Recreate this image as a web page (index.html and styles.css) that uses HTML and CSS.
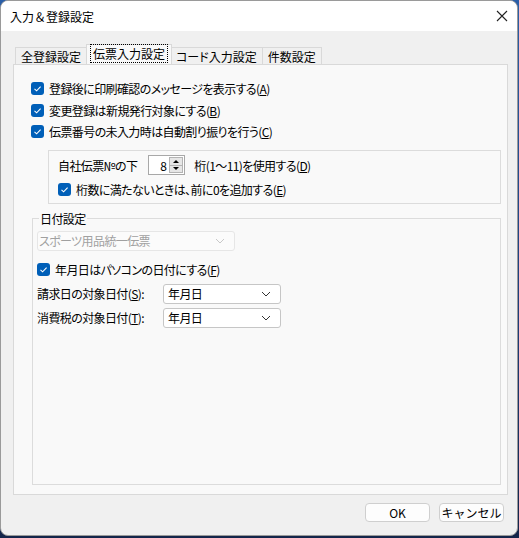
FILE: index.html
```html
<!DOCTYPE html>
<html lang="ja">
<head>
    <meta charset="UTF-8">
    <title>入力＆登録設定</title>
    <link rel="stylesheet" href="styles.css">
</head>
<body>
    <div class="window">
        <div class="titlebar">
            <span class="title">入力＆登録設定</span>
            <svg class="close" width="12" height="12" viewBox="0 0 12 12"><path d="M1 1L11 11M11 1L1 11" stroke="#222" stroke-width="1.1"/></svg>
        </div>

        <div class="tabs">
            <div class="tab">全登録設定</div>
            <div class="tab active"><span class="focus">伝票入力設定</span></div>
            <div class="tab">コード入力設定</div>
            <div class="tab">件数設定</div>
        </div>

        <div class="panel">
            <div class="row top">
                <span class="check"></span>
                <span>登録後に印刷確認のメッセージを表示する(<u>A</u>)</span>
            </div>
            <div class="row">
                <span class="check"></span>
                <span>変更登録は新規発行対象にする(<u>B</u>)</span>
            </div>
            <div class="row">
                <span class="check"></span>
                <span>伝票番号の未入力時は自動割り振りを行う(<u>C</u>)</span>
            </div>

            <div class="box">
                <div class="digits">
                    <span>自社伝票№の下</span>
                    <div class="spin">
                        <span class="spin-val">8</span>
                        <div class="spin-btns">
                            <span class="up"></span>
                            <span class="down"></span>
                        </div>
                    </div>
                    <span>桁(1～11)を使用する(<u>D</u>)</span>
                </div>
                <div class="row sub">
                    <span class="check"></span>
                    <span>桁数に満たないときは、前に0を追加する(<u>E</u>)</span>
                </div>
            </div>

            <fieldset class="group">
                <legend>日付設定</legend>
                <div class="combo disabled">
                    <span>スポーツ用品統一伝票</span>
                    <svg width="10" height="6" viewBox="0 0 10 6"><path d="M1 1L5 5L9 1" fill="none" stroke="#c8c8c8"/></svg>
                </div>
                <div class="row date">
                    <span class="check"></span>
                    <span>年月日はパソコンの日付にする(<u>F</u>)</span>
                </div>
                <div class="field">
                    <span class="label">請求日の対象日付(<u>S</u>):</span>
                    <div class="combo">
                        <span>年月日</span>
                        <svg width="10" height="6" viewBox="0 0 10 6"><path d="M1 1L5 5L9 1" fill="none" stroke="#333"/></svg>
                    </div>
                </div>
                <div class="field">
                    <span class="label">消費税の対象日付(<u>T</u>):</span>
                    <div class="combo">
                        <span>年月日</span>
                        <svg width="10" height="6" viewBox="0 0 10 6"><path d="M1 1L5 5L9 1" fill="none" stroke="#333"/></svg>
                    </div>
                </div>
            </fieldset>
        </div>

        <div class="buttons">
            <button class="btn">OK</button>
            <button class="btn">キャンセル</button>
        </div>
    </div>
</body>
</html>
```

FILE: styles.css
```css
body { margin: 0; background: linear-gradient(180deg, #2b5fa8 0%, #1d3c78 60%, #14254a 100%); height: 538px; overflow: hidden; font-family: "Noto Sans CJK JP", "Noto Sans", sans-serif; font-size: 12px; color: #000; font-feature-settings: "palt"; }
.window { width: 516px; height: 534px; border: 1px solid #9a9a9a; border-radius: 8px; background: #f0f0f0; overflow: hidden; display: flex; flex-direction: column; }
.titlebar { height: 30px; background: #fff; display: flex; align-items: center; justify-content: space-between; padding: 0 10px 0 9px; }
.title { font-size: 12px; font-feature-settings: normal; }
.close { margin-right: -1px; }

.tabs { display: flex; padding-left: 14px; margin-top: 13px; height: 20px; align-items: flex-end; }
.tab { height: 17px; line-height: 17px; border: 1px solid #d9d9d9; border-bottom: none; padding: 0 5px; background: #f0f0f0; box-sizing: border-box; }
.tab + .tab { border-left: none; }
.tab.active { height: 20px; line-height: 18px; background: #f9f9f9; margin: 0 -1px 0 -1px; border-left: 1px solid #d9d9d9; padding: 0 4px; position: relative; z-index: 1; }
.tab.active + .tab { border-left: none; }
.focus { outline: 1px dotted #000; outline-offset: 0; padding: 0 2px; }

.panel { margin: 0 9px 0 12px; height: 431px; box-sizing: border-box; border: 1px solid #d9d9d9; background: #f9f9f9; padding: 0 6px 0 17px; letter-spacing: -0.6px; }

.row { display: flex; align-items: center; height: 21.5px; gap: 5px; }
.row.top { margin-top: 13px; }
.check { width: 13px; height: 13px; border-radius: 3px; background: #005fb8; flex: none; background-image: url("data:image/svg+xml,%3Csvg xmlns='http://www.w3.org/2000/svg' width='13' height='13'%3E%3Cpath d='M3.5 6.8L5.6 8.8L9.6 4.6' fill='none' stroke='white' stroke-width='1.1'/%3E%3C/svg%3E"); }

.box { margin: 7px 0 0 17px; height: 54px; box-sizing: border-box; border: 1px solid #dcdcdc; padding: 0 0 0 9px; }
.digits { display: flex; align-items: center; height: 27px; margin-top: 1px; }
.spin { display: flex; align-items: center; width: 37px; height: 20px; box-sizing: border-box; border: 1px solid #a8a8a8; background: #fff; margin: 0 9px 0 11px; }
.spin-val { flex: 1; text-align: right; padding-right: 3px; }
.spin-btns { display: flex; flex-direction: column; width: 14px; height: 16px; margin-right: 1px; }
.spin-btns span { flex: 1; background: #e6e6e6; border: 1px solid #b4b4b4; display: flex; align-items: center; justify-content: center; }
.spin-btns .up { border-bottom: none; }
.spin-btns .up::after { content: ""; border: 3px solid transparent; border-bottom: 3px solid #000; border-top: none; }
.spin-btns .down::after { content: ""; border: 3px solid transparent; border-top: 3px solid #000; border-bottom: none; }
.row.sub { height: 22px; }

.group { margin: 7px 0 0 1px; padding: 0 0 0 4px; height: 274px; box-sizing: border-box; border: 1px solid #dcdcdc; }
.group legend { padding: 0 1px; margin-left: 2px; line-height: 16px; }
.combo { display: flex; align-items: center; justify-content: space-between; width: 118px; height: 20px; box-sizing: border-box; border: 1px solid #c6c6c6; border-radius: 3px; background: #fff; padding: 0 9px 0 4px; }
.combo.disabled { width: 198px; margin-top: 4px; background: #fbfbfb; border-color: #e6e6e6; color: #a0a0a0; padding-left: 1px; }
.row.date { margin-top: 7px; height: 24px; }
.field { display: flex; align-items: center; height: 24px; }
.label { width: 126px; }

.buttons { display: flex; justify-content: flex-end; gap: 9px; padding: 8px 13px 0 0; }
.btn { width: 65px; height: 19px; border: 1px solid #cfcfcf; border-radius: 4px; background: #fdfdfd; font-family: inherit; font-size: 12px; padding: 0; line-height: 17px; }
```
